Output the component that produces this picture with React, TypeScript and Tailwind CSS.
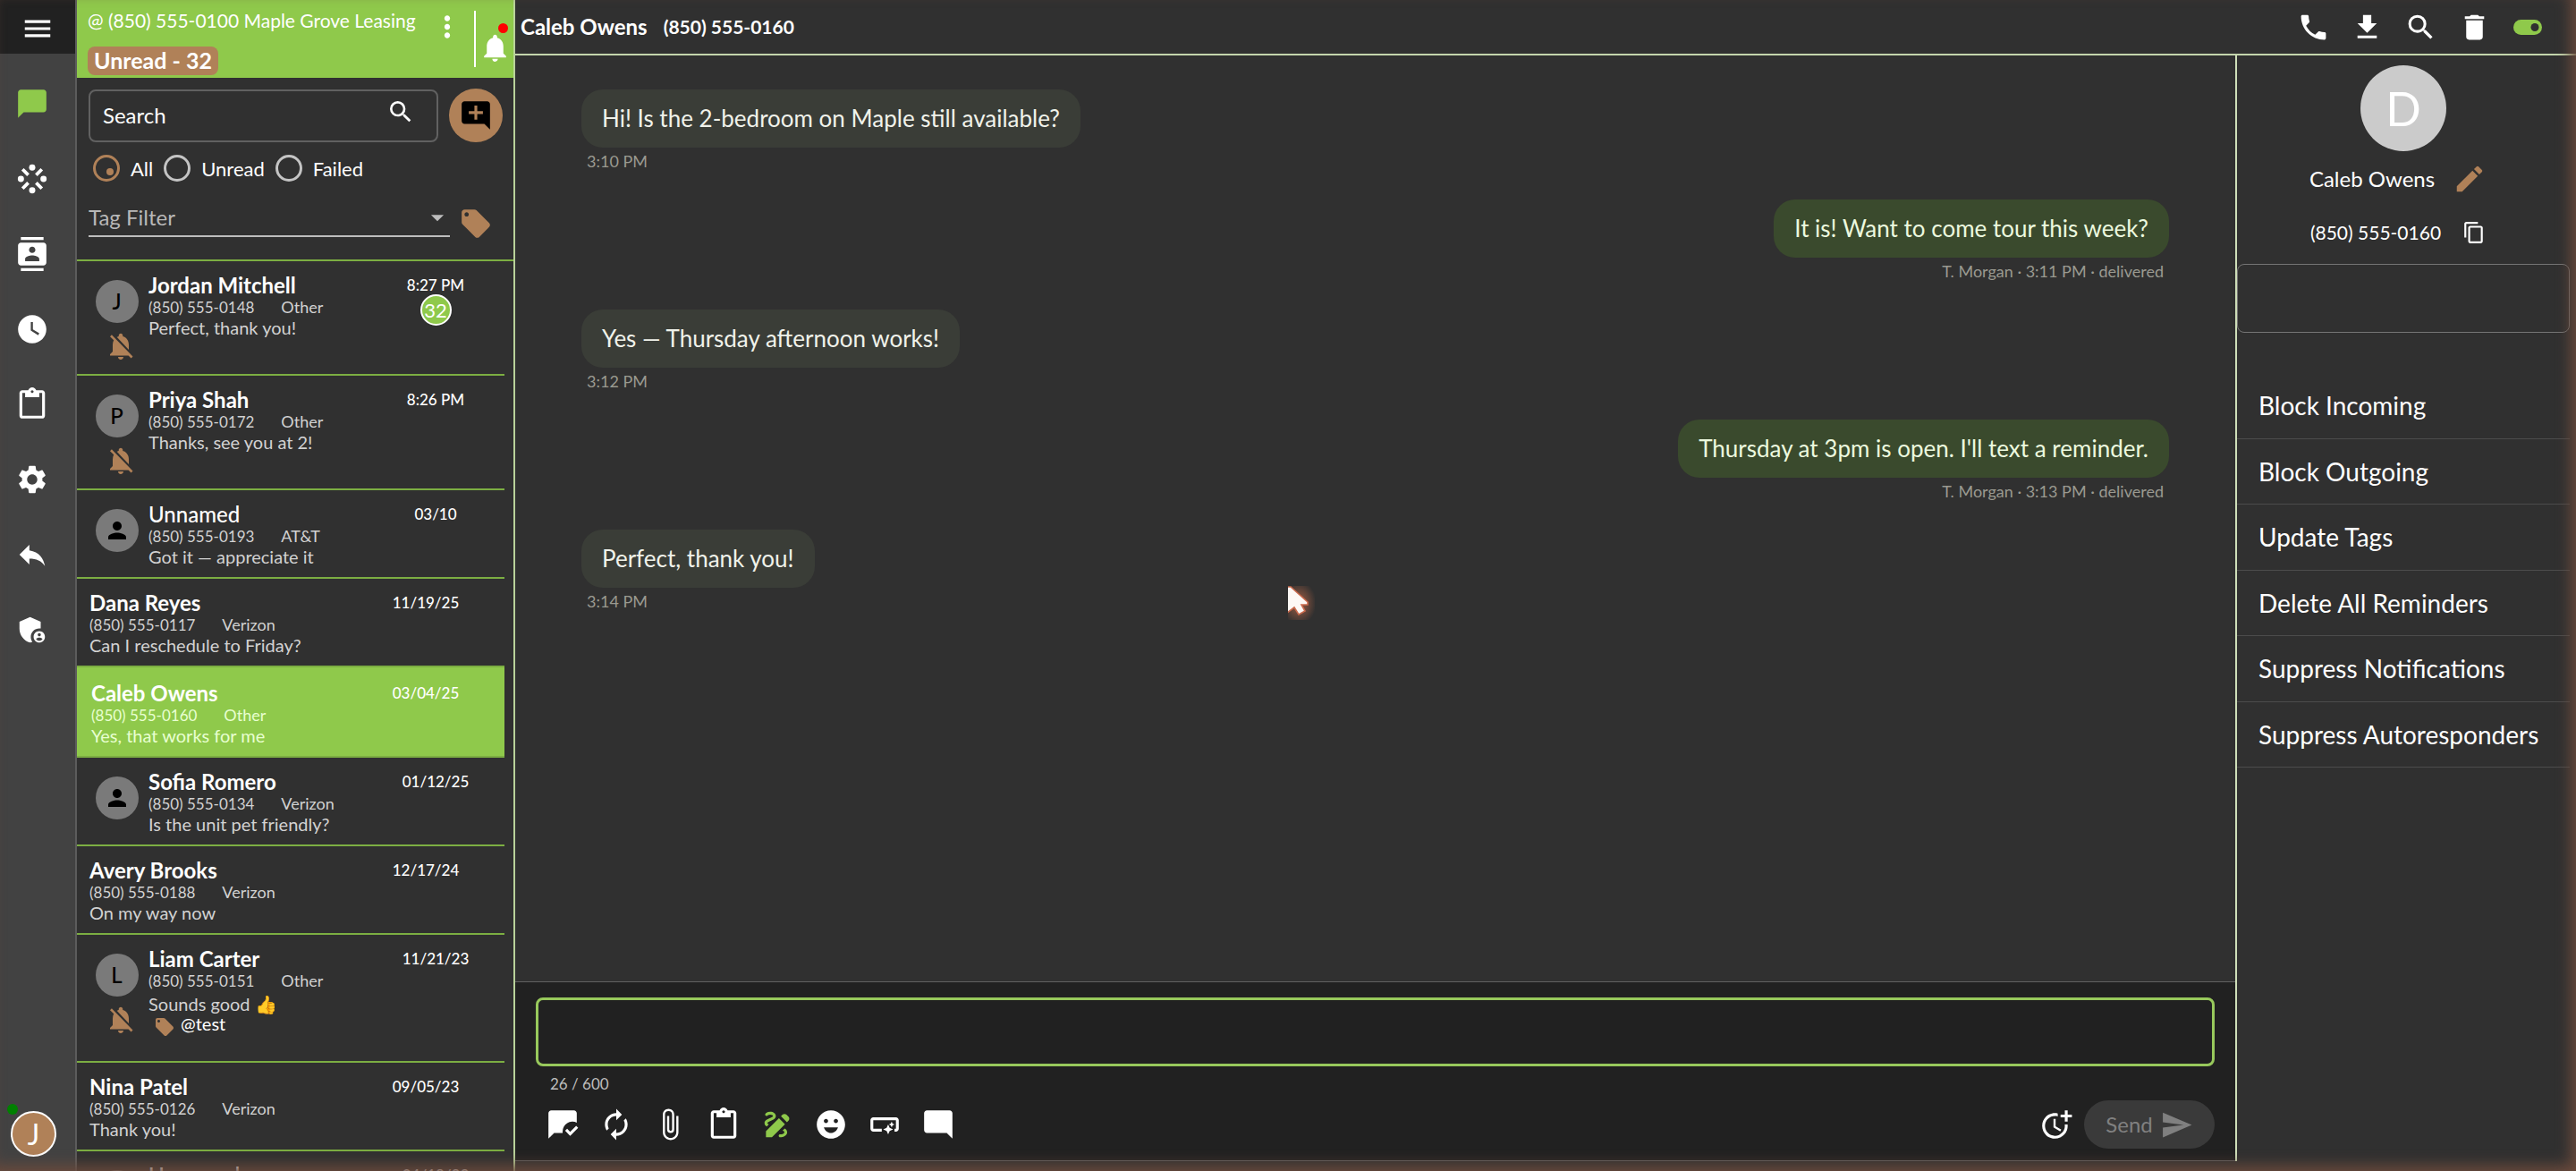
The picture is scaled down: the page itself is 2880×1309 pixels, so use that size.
import React, { useState } from 'react';
import {
  MdAddComment,
  MdAdminPanelSettings,
  MdArrowDropDown,
  MdAttachFile,
  MdAutorenew,
  MdChatBubble,
  MdContacts,
  MdContentCopy,
  MdContentPaste,
  MdDelete,
  MdDownload,
  MdDraw,
  MdEdit,
  MdEmojiEmotions,
  MdLocalOffer,
  MdMarkChatRead,
  MdMenu,
  MdModeComment,
  MdMoreTime,
  MdMoreVert,
  MdNotifications,
  MdNotificationsOff,
  MdPerson,
  MdPhone,
  MdReply,
  MdSearch,
  MdSend,
  MdSettings,
  MdSmartButton,
  MdWatchLater,
} from 'react-icons/md';

interface Conversation {
  id: number;
  name: string;
  phone: string;
  carrier: string;
  preview: string;
  date: string;
  avatar?: string;
  muted?: boolean;
  unread?: number;
  tag?: string;
  size: string;
}

interface Message {
  id: number;
  text: string;
  meta: string;
  outgoing?: boolean;
}

const conversations: Conversation[] = [
  { id: 1, name: 'Jordan Mitchell', phone: '(850) 555-0148', carrier: 'Other', preview: 'Perfect, thank you!', date: '8:27 PM', avatar: 'J', muted: true, unread: 32, size: 'h-32' },
  { id: 2, name: 'Priya Shah', phone: '(850) 555-0172', carrier: 'Other', preview: 'Thanks, see you at 2!', date: '8:26 PM', avatar: 'P', muted: true, size: 'h-32' },
  { id: 3, name: 'Unnamed', phone: '(850) 555-0193', carrier: 'AT&T', preview: 'Got it — appreciate it', date: '03/10', avatar: 'person', size: 'h-[99px]' },
  { id: 4, name: 'Dana Reyes', phone: '(850) 555-0117', carrier: 'Verizon', preview: 'Can I reschedule to Friday?', date: '11/19/25', size: 'h-[99px]' },
  { id: 5, name: 'Caleb Owens', phone: '(850) 555-0160', carrier: 'Other', preview: 'Yes, that works for me', date: '03/04/25', size: 'h-[101px]' },
  { id: 6, name: 'Sofia Romero', phone: '(850) 555-0134', carrier: 'Verizon', preview: 'Is the unit pet friendly?', date: '01/12/25', avatar: 'person', size: 'h-[99px]' },
  { id: 7, name: 'Avery Brooks', phone: '(850) 555-0188', carrier: 'Verizon', preview: 'On my way now', date: '12/17/24', size: 'h-[99px]' },
  { id: 8, name: 'Liam Carter', phone: '(850) 555-0151', carrier: 'Other', preview: 'Sounds good 👍', date: '11/21/23', avatar: 'L', muted: true, tag: '@test', size: 'h-[143px]' },
  { id: 9, name: 'Nina Patel', phone: '(850) 555-0126', carrier: 'Verizon', preview: 'Thank you!', date: '09/05/23', size: 'h-[99px]' },
  { id: 10, name: 'Unnamed', phone: '', carrier: '', preview: '', date: '04/18/23', avatar: 'person', size: 'h-[99px]' },
];

const messages: Message[] = [
  { id: 1, text: 'Hi! Is the 2-bedroom on Maple still available?', meta: '3:10 PM' },
  { id: 2, text: 'It is! Want to come tour this week?', meta: 'T. Morgan · 3:11 PM · delivered', outgoing: true },
  { id: 3, text: 'Yes — Thursday afternoon works!', meta: '3:12 PM' },
  { id: 4, text: "Thursday at 3pm is open. I'll text a reminder.", meta: 'T. Morgan · 3:13 PM · delivered', outgoing: true },
  { id: 5, text: 'Perfect, thank you!', meta: '3:14 PM' },
];

const contactActions = [
  'Block Incoming',
  'Block Outgoing',
  'Update Tags',
  'Delete All Reminders',
  'Suppress Notifications',
  'Suppress Autoresponders',
];

const SpokesIcon = ({ size }: { size: number }) => (
  <svg width={size} height={size} viewBox="0 0 24 24" fill="currentColor">
    <circle cx="12" cy="4" r="2.2" />
    <circle cx="12" cy="20" r="2.2" />
    <circle cx="4" cy="12" r="2.2" />
    <circle cx="20" cy="12" r="2.2" />
    <path
      d="M5.2 5.2 9.2 9.2M18.8 5.2 14.8 9.2M5.2 18.8 9.2 14.8M18.8 18.8 14.8 14.8"
      stroke="currentColor"
      strokeWidth="2.4"
    />
  </svg>
);

const ToggleIcon = () => (
  <svg width="32" height="17" viewBox="0 0 32 17">
    <rect width="32" height="17" rx="8.5" fill="#8fc94b" />
    <circle cx="24" cy="8.5" r="4.5" fill="#303030" />
  </svg>
);

const PointerIcon = () => (
  <svg width="30" height="38" viewBox="0 0 30 38">
    <defs>
      <radialGradient id="pointer-glow" cx="40%" cy="50%" r="65%">
        <stop offset="0" stopColor="#a35f45" />
        <stop offset="1" stopColor="#303030" />
      </radialGradient>
    </defs>
    <rect width="30" height="38" fill="url(#pointer-glow)" />
    <path
      d="M-1 1H3L22 18V21H15L19 28L12 32L7 24L-1 30Z"
      fill="#fdf8f5"
      stroke="#c9694c"
      strokeWidth="1.6"
    />
  </svg>
);

const railItems = [
  { label: 'Messages', icon: <MdChatBubble size={38} />, active: true },
  { label: 'Campaigns', icon: <SpokesIcon size={38} /> },
  { label: 'Contacts', icon: <MdContacts size={38} /> },
  { label: 'Scheduled', icon: <MdWatchLater size={38} /> },
  { label: 'Templates', icon: <MdContentPaste size={38} /> },
  { label: 'Settings', icon: <MdSettings size={38} /> },
  { label: 'Autoreplies', icon: <MdReply size={38} /> },
  { label: 'Admin', icon: <MdAdminPanelSettings size={38} /> },
];

const headerActions = [
  { label: 'Call', icon: <MdPhone size={37} /> },
  { label: 'Download', icon: <MdDownload size={37} /> },
  { label: 'Search messages', icon: <MdSearch size={37} /> },
  { label: 'Delete', icon: <MdDelete size={37} /> },
  { label: 'Toggle details', icon: <ToggleIcon /> },
];

const composerActions = [
  { label: 'Mark read', icon: <MdMarkChatRead size={38} /> },
  { label: 'Refresh', icon: <MdAutorenew size={38} /> },
  { label: 'Attach file', icon: <MdAttachFile size={38} /> },
  { label: 'Insert template', icon: <MdContentPaste size={38} /> },
  { label: 'Signature', icon: <MdDraw size={38} />, active: true },
  { label: 'Emoji', icon: <MdEmojiEmotions size={38} /> },
  { label: 'Smart reply', icon: <MdSmartButton size={38} /> },
  { label: 'Internal note', icon: <MdModeComment size={38} /> },
];

const NavRail = () => (
  <nav className="flex w-[86px] shrink-0 flex-col border-r-2 border-[#5c5c5c] bg-[#424242]">
    <button aria-label="Menu" className="flex h-[60px] items-center justify-center bg-[#212121] pt-1">
      <MdMenu size={38} />
    </button>
    <div className="mt-[14px] flex w-[72px] flex-col">
      {railItems.map((item) => (
        <button
          key={item.label}
          aria-label={item.label}
          className={`flex h-[84px] items-center justify-center ${item.active ? 'text-[#8fc94b]' : ''}`}
        >
          {item.icon}
        </button>
      ))}
    </div>
    <div className="relative mt-auto mb-4 ml-3 w-[51px]">
      <span className="absolute -top-2 -left-1 size-3 rounded-full bg-[#008000]" />
      <button className="flex size-[51px] items-center justify-center rounded-full border-2 border-white bg-[#b08158] text-[32px]">
        J
      </button>
    </div>
  </nav>
);

const ConversationRow = ({ item, selected }: { item: Conversation; selected: boolean }) => (
  <li
    className={`flex shrink-0 border-b-2 border-[#7cae42] ${item.size} ${
      selected ? 'bg-[#8fc94b] pt-[15px] pl-4' : 'pt-[13px]'
    } ${!selected && !item.avatar ? 'pl-[14px]' : ''}`}
  >
    {item.avatar && (
      <div className="flex w-20 shrink-0 flex-col items-center pt-2 pl-[9px]">
        <div className="flex size-12 items-center justify-center rounded-full bg-[#7a7a7a] text-2xl font-medium text-black">
          {item.avatar === 'person' ? <MdPerson size={30} /> : item.avatar}
        </div>
        {item.muted && <MdNotificationsOff size={36} className="mt-2 ml-2 text-[#b08158]" />}
      </div>
    )}
    <div className="min-w-0 flex-1 text-xl leading-[23px] text-[#d2d2d2]">
      <h3 className={`text-2xl leading-[27px] text-white ${item.name === 'Unnamed' ? 'font-medium' : 'font-bold'}`}>
        {item.name}
      </h3>
      <p className={`flex gap-[30px] text-[17px] leading-[23px] ${selected ? 'text-[#e8ffd0]' : ''}`}>
        <span>{item.phone}</span>
        <span className="text-lg leading-[23px]">{item.carrier}</span>
      </p>
      <p className={`${selected ? 'text-[#e8ffd0]' : ''} ${item.tag ? 'leading-[28px]' : ''}`}>
        {item.preview}
      </p>
      {item.tag && (
        <p className="flex gap-[6px] pl-[6px] leading-4 text-white">
          <MdLocalOffer size={24} className="text-[#b08158]" />
          {item.tag}
        </p>
      )}
    </div>
    <div className={`flex w-[108px] shrink-0 flex-col items-center text-[17px] leading-[28px] font-medium ${item.avatar ? 'mr-[23px]' : 'mr-[34px]'}`}>
      <time>{item.date}</time>
      {item.unread && (
        <span className="-mt-1 flex size-[35px] items-center justify-center rounded-full border-2 border-white bg-[#8fc94b] text-[22px] font-normal">
          {item.unread}
        </span>
      )}
    </div>
  </li>
);

const Sidebar = () => {
  const [filter, setFilter] = useState('All');

  return (
    <aside className="flex w-[490px] shrink-0 flex-col border-r-2 border-[#b9d29a]">
      {/* Line header */}
      <header className="flex h-[87px] shrink-0 bg-[#8fc94b] pl-3">
        <div className="min-w-0 flex-1 pt-2">
          <p className="text-[21px] leading-[30px] whitespace-nowrap">@ (850) 555-0100 Maple Grove Leasing</p>
          <span className="mt-[14px] inline-flex h-8 items-center rounded-lg bg-[#b08158] px-[7px] text-[25px] font-bold">
            Unread - 32
          </span>
        </div>
        <button aria-label="More options" className="mt-[11px] mr-[11px] h-[38px] w-[38px]">
          <MdMoreVert size={38} />
        </button>
        <div className="relative mt-3 flex h-[63px] w-[44px] items-center border-l-2 border-white pt-5 pl-[3px]">
          <button aria-label="Notifications">
            <MdNotifications size={37} />
          </button>
          <span className="absolute top-[14px] right-[6px] size-[11px] rounded-full bg-[#ff0000]" />
        </div>
      </header>

      {/* Search and filters */}
      <div className="flex h-[205px] shrink-0 flex-col border-b-2 border-[#7cae42] pr-[11px] pl-[13px]">
        <div className="mt-3 flex items-center gap-3">
          <label className="flex h-[59px] w-[391px] items-center rounded-lg border-2 border-[#616161] pr-6 pl-[14px]">
            <input
              type="text"
              aria-label="Search"
              placeholder="Search"
              className="min-w-0 flex-1 bg-transparent text-2xl placeholder:text-white focus:outline-none"
            />
            <MdSearch size={32} className="-mt-2" />
          </label>
          <button
            aria-label="New message"
            className="flex size-[60px] items-center justify-center rounded-full bg-[#b08158] text-black"
          >
            <MdAddComment size={38} />
          </button>
        </div>
        <div className="mt-[14px] flex h-[30px] items-center gap-3 pl-[5px] text-[22px]">
          {['All', 'Unread', 'Failed'].map((name) => (
            <label key={name} className="flex items-center gap-3">
              <span className="relative flex">
                <input
                  type="radio"
                  name="filter"
                  checked={filter === name}
                  onChange={() => setFilter(name)}
                  className="size-[30px] appearance-none rounded-full border-3 border-[#c4c4c4] checked:border-[#b08158]"
                />
                {filter === name && (
                  <span className="absolute right-[7px] bottom-[7px] size-2 rounded-full bg-[#b08158]" />
                )}
              </span>
              {name}
            </label>
          ))}
        </div>
        <div className="mt-5 flex gap-[10px]">
          <div className="relative flex h-[42px] w-[404px] border-b-2 border-[#bdbdbd]">
            <select
              aria-label="Tag Filter"
              className="flex-1 appearance-none bg-transparent text-2xl text-[#b8b8b8]"
            >
              <option>Tag Filter</option>
            </select>
            <MdArrowDropDown size={34} className="pointer-events-none absolute top-[3px] -right-[3px] text-[#bdbdbd]" />
          </div>
          <button aria-label="Tags" className="mt-2 text-[#b08158]">
            <MdLocalOffer size={38} />
          </button>
        </div>
      </div>

      <ul className="mr-[10px] flex min-h-0 flex-1 flex-col overflow-hidden">
        {conversations.map((item) => (
          <ConversationRow key={item.id} item={item} selected={item.id === 5} />
        ))}
      </ul>
    </aside>
  );
};

const Composer = () => (
  <form className="mb-[11px] flex h-[201px] shrink-0 flex-col border-y border-[#616161] bg-[#212121] px-[23px] pt-[17px]">
    <textarea
      aria-label="Message"
      className="h-[77px] resize-none rounded-lg border-3 border-[#98c95c] bg-transparent px-4 py-3 text-2xl focus:outline-none"
    />
    <p className="mt-[10px] pl-4 text-[17px] leading-5 text-[#bdbdbd]">26 / 600</p>
    <div className="mt-2 flex items-center">
      {composerActions.map((item) => (
        <button
          key={item.label}
          type="button"
          aria-label={item.label}
          className={`flex w-[60px] justify-center ${item.active ? 'text-[#8fc94b]' : ''}`}
        >
          {item.icon}
        </button>
      ))}
      <button type="button" aria-label="Schedule" className="mr-3 ml-auto">
        <MdMoreTime size={38} />
      </button>
      <button
        type="submit"
        className="flex h-[54px] w-[146px] items-center justify-center gap-2 rounded-full bg-[#3a3a3a] text-2xl text-[#808080]"
      >
        Send
        <MdSend size={37} />
      </button>
    </div>
  </form>
);

const Chat = () => (
  <main className="flex min-w-0 flex-1 flex-col">
    <div className="flex min-h-0 flex-1 flex-col gap-[33px] overflow-hidden px-[74px] pt-[38px]">
      {messages.map((message) => (
        <div key={message.id} className={`flex flex-col ${message.outgoing ? 'items-end' : 'items-start'}`}>
          <p
            className={`flex h-[65px] items-center rounded-3xl px-[23px] text-[26px] ${
              message.outgoing ? 'bg-[#3a4a2d] text-[#ecf9df]' : 'bg-[#3a3d37] text-[#f0f2ea]'
            }`}
          >
            {message.text}
          </p>
          <p className="mt-[5px] px-[6px] text-lg leading-5 text-[#9a9a90]">{message.meta}</p>
        </div>
      ))}
    </div>
    <Composer />
  </main>
);

const ContactPanel = () => (
  <aside className="mb-[11px] flex w-[381px] shrink-0 flex-col border-l-2 border-[#cfdfb9] pr-[7px]">
    <div className="mt-[11px] flex size-24 items-center justify-center self-center rounded-full bg-[#cbcbcb] text-[52px]">
      D
    </div>
    <div className="mt-3 flex h-[38px] items-center justify-center gap-5 pr-3 text-2xl">
      Caleb Owens
      <button aria-label="Edit name" className="text-[#b08158]">
        <MdEdit size={38} />
      </button>
    </div>
    <div className="mt-[22px] flex h-[38px] items-center justify-center gap-6 pr-3 text-[21px]">
      (850) 555-0160
      <button aria-label="Copy number">
        <MdContentCopy size={26} />
      </button>
    </div>
    <input
      aria-label="Notes"
      className="mt-4 h-[77px] w-full rounded-lg border border-[#757575] bg-transparent px-4 text-2xl"
    />
    <ul className="mt-[45px] grid h-[441px] grid-rows-6">
      {contactActions.map((action) => (
        <li key={action} className="flex border-b border-[#4c4c4c]">
          <button className="flex-1 pl-6 text-left text-[28px]">{action}</button>
        </li>
      ))}
    </ul>
  </aside>
);

export default function App() {
  return (
    <div className="relative flex h-screen overflow-hidden bg-[#303030] font-['Lato',sans-serif] text-white">
      <NavRail />
      <Sidebar />
      <div className="flex min-w-0 flex-1 flex-col">
        <header className="flex h-[62px] shrink-0 items-center border-b-2 border-[#c3d5ac] pr-6 pl-[6px]">
          <h1 className="flex items-center gap-[18px] text-2xl font-bold">
            <span>Caleb Owens</span>
            <span className="text-[21px]">(850) 555-0160</span>
          </h1>
          <div className="ml-auto flex">
            {headerActions.map((item) => (
              <button key={item.label} aria-label={item.label} className="flex w-[60px] items-center justify-center">
                {item.icon}
              </button>
            ))}
          </div>
        </header>
        <div className="flex min-h-0 flex-1">
          <Chat />
          <ContactPanel />
        </div>
      </div>

      {/* Screen edge glow and pointer */}
      <div className="pointer-events-none absolute inset-0 shadow-[inset_-8px_-8px_16px_-2px_#6b4a3c]" />
      <div className="pointer-events-none absolute top-1/2 left-1/2">
        <PointerIcon />
      </div>
    </div>
  );
}
